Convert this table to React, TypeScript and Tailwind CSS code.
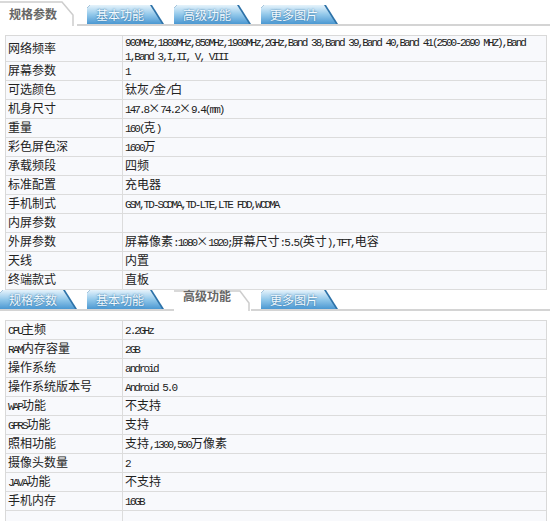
import React from "react";

type Row = { label: string; value: string[] };

const specRows: Row[] = [
  {
    label: "网络频率",
    value: [
      "900MHz,1800MHz,850MHz,1900MHz,2GHz,Band 38,Band 39,Band 40,Band 41(2500-2690 MHZ),Band",
      "1,Band 3,I,II, V, VIII",
    ],
  },
  { label: "屏幕参数", value: ["1"] },
  { label: "可选颜色", value: ["钛灰/金/白"] },
  { label: "机身尺寸", value: ["147.8×74.2×9.4(mm)"] },
  { label: "重量", value: ["160(克)"] },
  { label: "彩色屏色深", value: ["1600万"] },
  { label: "承载频段", value: ["四频"] },
  { label: "标准配置", value: ["充电器"] },
  { label: "手机制式", value: ["GSM,TD-SCDMA,TD-LTE,LTE FDD,WCDMA"] },
  { label: "内屏参数", value: [""] },
  { label: "外屏参数", value: ["屏幕像素:1080×1920;屏幕尺寸:5.5(英寸),TFT,电容"] },
  { label: "天线", value: ["内置"] },
  { label: "终端款式", value: ["直板"] },
];

const advancedRows: Row[] = [
  { label: "CPU主频", value: ["2.2GHz"] },
  { label: "RAM内存容量", value: ["2GB"] },
  { label: "操作系统", value: ["android"] },
  { label: "操作系统版本号", value: ["Android 5.0"] },
  { label: "WAP功能", value: ["不支持"] },
  { label: "GPRS功能", value: ["支持"] },
  { label: "照相功能", value: ["支持,1300,500万像素"] },
  { label: "摄像头数量", value: ["2"] },
  { label: "JAVA功能", value: ["不支持"] },
  { label: "手机内存", value: ["16GB"] },
  { label: "", value: [""] },
];

const tabs = ["规格参数", "基本功能", "高级功能", "更多图片"];

// latin runs are set narrower than the CJK ones, like the old bitmap songti
const Mixed = ({ text }: { text: string }) => (
  <span>
    {text.split(/([\u2E80-\u9FFF\uFF00-\uFFEF×]+)/).map((part, i) =>
      i % 2 === 1 ? (
        <span key={i}>{part}</span>
      ) : (
        <span key={i} className="font-['Liberation_Mono',monospace] text-[11px] tracking-[-1.95px]">
          {part}
        </span>
      )
    )}
  </span>
);

const BlueTab = ({ label }: { label: string }) => (
  <div className="relative w-[77px] h-[19px] shrink-0 bg-[#2d72a8] [clip-path:polygon(0_3px,3px_0,65px_0,77px_100%,0_100%)]">
    <div className="absolute inset-0 bg-linear-to-b from-[#e6f3fb] via-[#92c8ea] to-[#4a98d2] [clip-path:polygon(0_3px,3px_0,63px_0,75px_100%,0_100%)] pl-[9px] text-[12px] leading-[19px] text-[#f2faff] [text-shadow:0_0_2px_#1f5f91]">
      {label}
    </div>
  </div>
);

const ActiveTab = ({ label, points, height, textClass }: { label: string; points: string; height: number; textClass: string }) => (
  <div className="relative w-[77px] shrink-0 self-stretch -mb-[2px] bg-white">
    <svg className="absolute left-0 top-0" width="77" height={height}>
      <polyline points={points} fill="none" stroke="#cdcdcd" strokeWidth="1.5" />
    </svg>
    <div className={`relative pl-[9px] text-[12px] font-bold text-[#666] ${textClass}`}>{label}</div>
  </div>
);

const TabBar = ({ active, tall }: { active: number; tall: boolean }) => (
  <div className={`flex items-end gap-[10px] border-b-2 border-[#d4d4d4] ${tall ? "h-[26px]" : "h-[21px]"}`}>
    {tabs.map((t, i) =>
      i === active ? (
        <ActiveTab
          key={t}
          label={t}
          height={tall ? 26 : 21}
          points={tall ? "0,2 62,2 73,15 73,26" : "0,1 66,1 75,13 75,21"}
          textClass={tall ? "pt-[6px] leading-[16px]" : "pt-0 leading-[12px]"}
        />
      ) : (
        <BlueTab key={t} label={t} />
      )
    )}
  </div>
);

const SpecTable = ({ rows, className = "" }: { rows: Row[]; className?: string }) => (
  <div className={`ml-[5px] w-[542px] border border-[#d9d9d9] bg-[#f8f9fc] ${className}`}>
    {rows.map((r, i) => (
      <div
        key={i}
        className={`flex border-b border-[#dcdcdc] ${r.value.length > 1 ? "h-[26px]" : "h-[19px]"}`}
      >
        <div className="w-[117px] shrink-0 border-r border-[#dcdcdc] pl-[2px] flex items-center leading-[14px] whitespace-nowrap">
          <Mixed text={r.label} />
        </div>
        <div className="flex-1 pl-[2px] flex flex-col justify-center leading-[12px] whitespace-nowrap">
          {r.value.map((line, j) => (
            <div key={j}>
              <Mixed text={line} />
            </div>
          ))}
        </div>
      </div>
    ))}
  </div>
);

export default function App() {
  return (
    <div className="w-[550px] h-[521px] overflow-hidden bg-white font-['Noto_Sans_CJK_SC',sans-serif] text-[12px] text-[#222]">
      <TabBar active={0} tall />
      <SpecTable rows={specRows} className="mt-[9px] border-b-0" />
      <TabBar active={2} tall={false} />
      <SpecTable rows={advancedRows} className="mt-[9px]" />
    </div>
  );
}
